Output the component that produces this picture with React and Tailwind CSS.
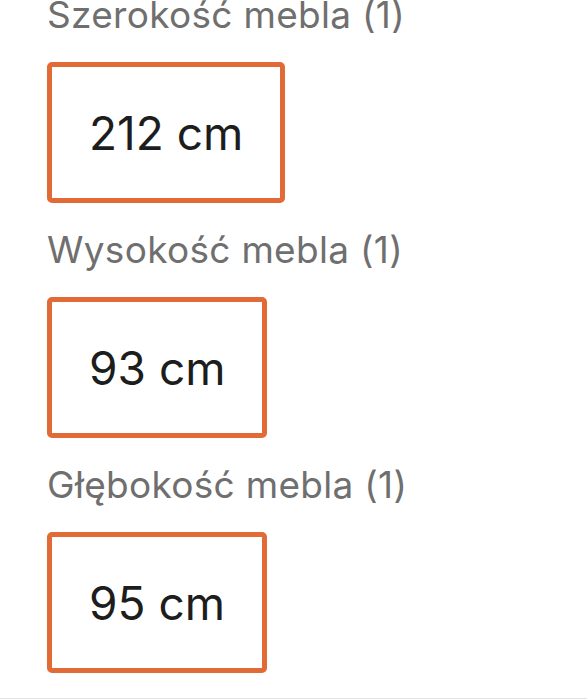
import React from 'react';

const dimensions = [
    { label: 'Szerokość mebla (1)', value: '212 cm' },
    { label: 'Wysokość mebla (1)', value: '93 cm' },
    { label: 'Głębokość mebla (1)', value: '95 cm' },
];

function DimensionField({ label, value }) {
    return (
        <div className="pb-[25px]">
            <div className="text-[37px] leading-[43px] tracking-[0.3px] text-[#6f6f6f] mb-[26px]">{label}</div>
            <div className="inline-flex h-[141px] items-center px-[37px] border-[5px] border-[#e26a37] rounded-[5px] bg-white">
                <span className="text-[46px] text-[#1d1d1d] leading-none">{value}</span>
            </div>
        </div>
    );
}

export default function App() {
    return (
        <div className="h-[699px] overflow-hidden bg-white" style={{ fontFamily: 'Inter, "Noto Sans", sans-serif' }}>
            <div className="-mt-[7px] pl-[47px] border-b border-[#e2e2e2]">
                {dimensions.map((d) => (
                    <DimensionField key={d.label} label={d.label} value={d.value} />
                ))}
            </div>
        </div>
    );
}
